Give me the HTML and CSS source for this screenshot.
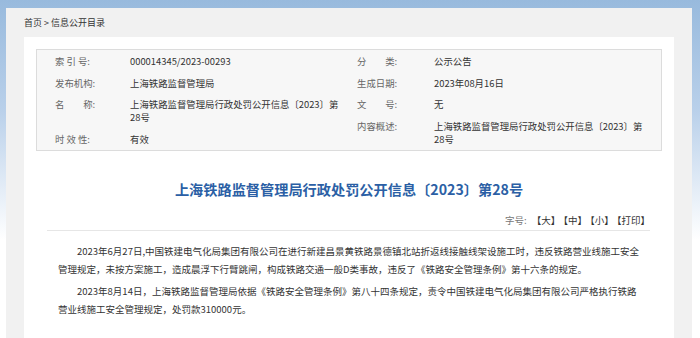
FILE: index.html
```html
<!DOCTYPE html>
<html lang="zh-CN">
<head>
    <meta charset="UTF-8">
    <meta name="viewport" content="width=device-width, initial-scale=1.0">
    <title>上海铁路监督管理局行政处罚公开信息〔2023〕第28号</title>
    <link rel="stylesheet" href="styles.css">
</head>
<body>
    <div class="page">
        <div class="crumb"><a href="#">首页</a> &gt; <a href="#">信息公开目录</a></div>
        <div class="main">
            <div class="meta">
                <ul class="meta-col meta-left">
                    <li><span class="label">索 引 号:</span><span class="value">000014345/2023-00293</span></li>
                    <li><span class="label">发布机构:</span><span class="value">上海铁路监督管理局</span></li>
                    <li><span class="label">名　　称:</span><span class="value">上海铁路监督管理局行政处罚公开信息〔2023〕第28号</span></li>
                    <li><span class="label">时 效 性:</span><span class="value">有效</span></li>
                </ul>
                <ul class="meta-col meta-right">
                    <li><span class="label">分　　类:</span><span class="value">公示公告</span></li>
                    <li><span class="label">生成日期:</span><span class="value">2023年08月16日</span></li>
                    <li><span class="label">文　　号:</span><span class="value">无</span></li>
                    <li><span class="label">内容概述:</span><span class="value">上海铁路监督管理局行政处罚公开信息〔2023〕第28号</span></li>
                </ul>
            </div>

            <h1 class="title">上海铁路监督管理局行政处罚公开信息〔2023〕第28号</h1>

            <div class="tools">
                <span class="tools-label">字号:</span><a href="#">【大】</a><a href="#">【中】</a><a href="#">【小】</a><a href="#">【打印】</a>
            </div>

            <div class="article">
                <p>2023年6月27日,中国铁建电气化局集团有限公司在进行新建昌景黄铁路景德镇北站折返线接触线架设施工时，违反铁路营业线施工安全管理规定，未按方案施工，造成晨浮下行臂跳闸，构成铁路交通一般D类事故，违反了《铁路安全管理条例》第十六条的规定。</p>
                <p>2023年8月14日，上海铁路监督管理局依据《铁路安全管理条例》第八十四条规定，责令中国铁建电气化局集团有限公司严格执行铁路营业线施工安全管理规定，处罚款310000元。</p>
            </div>
        </div>
    </div>
</body>
</html>
```

FILE: styles.css
```css
html, body {
    margin: 0;
    height: 100%;
}
body {
    background: linear-gradient(#98badd 0, #b9d0ea 110px, #ffffff 240px);
    font-family: "Noto Sans CJK SC", "Noto Sans", sans-serif;
    color: #333;
    font-size: 9.5px;
    padding: 8px 8px 0 6px;
    box-sizing: border-box;
}
a {
    color: inherit;
    text-decoration: none;
}
.page {
    background: #f1f1f1;
    padding: 0 18px;
    min-height: 100%;
}
.crumb {
    height: 29px;
    line-height: 29px;
    font-size: 9px;
    color: #333;
}
.main {
    background: #fff;
    padding: 12px 12px 20px;
}
.meta {
    display: flex;
    padding: 1px 12px 0 18px;
    background: #f7f7f7;
    border: 1px solid #dcdcdc;
    font-size: 9.4px;
    line-height: 13px;
}
.meta-col {
    list-style: none;
    margin: 0;
    padding: 0;
}
.meta-left {
    width: 302px;
}
.meta-right {
    flex: 1;
}
.meta-col li {
    display: flex;
    padding: 4.25px 0;
}
.label {
    color: #666;
    flex: none;
}
.meta-left .label {
    width: 75px;
}
.meta-right .label {
    width: 77px;
}
.value {
    flex: 1;
}
.meta-left .value {
    padding-right: 12px;
}
.title {
    margin: 28px 0 0;
    text-align: center;
    font-size: 14.2px;
    line-height: 20px;
    color: #2b5fa5;
    font-weight: bold;
}
.tools {
    margin: 14px 12px 0 11px;
    padding: 0 0 3px 0;
    text-align: right;
    line-height: 14px;
    border-bottom: 1px solid #e6e6e6;
}
.tools-label {
    color: #777;
    margin-right: 2px;
}
.tools a {
    color: #333;
    margin-left: 3px;
}
.article {
    margin: 11px 12px 0 11px;
    padding: 0 9px 0 11px;
}
.article p {
    margin: 0 0 4px;
    line-height: 18px;
    text-indent: 2em;
}
```
